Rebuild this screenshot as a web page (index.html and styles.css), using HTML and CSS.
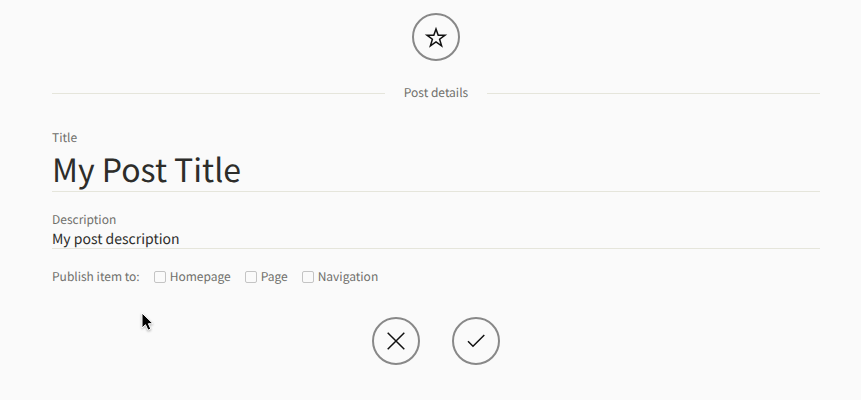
FILE: index.html
```
<!DOCTYPE html>
<html lang="en">
<head>
  <meta charset="UTF-8">
  <title>Post details</title>
  <link rel="stylesheet" href="styles.css">
</head>
<body>
  <form class="post-form">
    <button type="button" class="round-button star-button" aria-label="Choose icon">
      <svg width="24" height="24" viewBox="0 0 24 24">
        <path d="M12 4l2.200 6.200h6.800l-5.400 4 2 6.600-5.600-4-5.600 4 2-6.600-5.400-4h6.800z"/>
      </svg>
    </button>

    <h2 class="divider">Post details</h2>

    <div class="field">
      <label for="title">Title</label>
      <input type="text" id="title" class="title-input" value="My Post Title">
    </div>

    <div class="field">
      <label for="description">Description</label>
      <input type="text" id="description" class="description-input" value="My post description">
    </div>

    <div class="publish">
      <span>Publish item to:</span>
      <label><input type="checkbox" name="homepage">Homepage</label>
      <label><input type="checkbox" name="page">Page</label>
      <label><input type="checkbox" name="navigation">Navigation</label>
    </div>

    <div class="actions">
      <button type="button" class="round-button" aria-label="Cancel">
        <svg width="24" height="24" viewBox="0 0 24 24">
          <path d="M3.700 3.700l16.600 16.600M20.300 3.700L3.700 20.300"/>
        </svg>
      </button>
      <button type="button" class="round-button" aria-label="Save">
        <svg width="24" height="24" viewBox="0 0 24 24">
          <path d="M4 12.200l5 5L20.300 6"/>
        </svg>
      </button>
    </div>
  </form>

  <svg class="cursor" width="16" height="22" viewBox="0 0 16 22">
    <path d="M2 2v15l3.500-3.300 2.500 5.500 2.800-1.200-2.400-5.300h4.600z"/>
  </svg>
</body>
</html>
```
FILE: styles.css
```
body {
  margin: 0;
  background-color: #fafafa;
  color: #6f6f6b;
  font-family: "Noto Sans CJK SC", "Open Sans", sans-serif;
  font-size: 12px;
  line-height: 16px;
  text-rendering: geometricPrecision;
}
.post-form {
  padding: 13px 41px 35px 52px;
}
.round-button {
  display: flex;
  align-items: center;
  justify-content: center;
  box-sizing: border-box;
  width: 48px;
  height: 48px;
  padding: 0;
  border: 2px solid #888;
  border-radius: 50%;
  background: none;
  cursor: pointer;
}
.round-button svg {
  fill: none;
  stroke: #111;
  stroke-width: 1.5;
}
.star-button {
  margin: 0 auto;
}
.divider {
  display: flex;
  align-items: center;
  gap: 19px;
  margin: 24px 0 29px;
  font-size: 12px;
  font-weight: normal;
}
.divider::before,
.divider::after {
  content: "";
  flex: 1;
  height: 1px;
  background-color: #e5e5db;
}
.field {
  margin-bottom: 20px;
}
.field label {
  display: block;
}
.field input {
  display: block;
  box-sizing: border-box;
  width: 100%;
  padding: 0;
  border: 0;
  border-bottom: 1px solid #e5e5db;
  border-radius: 0;
  outline: none;
  background: none;
  color: #2d2d2a;
  font-family: inherit;
  text-rendering: inherit;
}
.field .title-input {
  height: 46px;
  font-size: 32px;
}
.field .description-input {
  height: 21px;
  padding-top: 1px;
  font-size: 14px;
}
.publish {
  display: flex;
  align-items: center;
  gap: 14px;
}
.publish label {
  display: flex;
  align-items: center;
  gap: 4px;
}
.publish input {
  appearance: none;
  box-sizing: border-box;
  width: 12px;
  height: 12px;
  margin: 0;
  border: 1px solid #c4c4c4;
  border-radius: 2px;
}
.publish input:checked {
  background-color: #888;
}
.actions {
  display: flex;
  justify-content: center;
  gap: 32px;
  margin-top: 32px;
}
/* mouse pointer over the form */
.cursor {
  position: absolute;
  top: 311px;
  left: 140px;
  fill: #000;
  stroke: #fff;
  filter: drop-shadow(0 1px 1px rgba(0, 0, 0, 0.3));
}
```
